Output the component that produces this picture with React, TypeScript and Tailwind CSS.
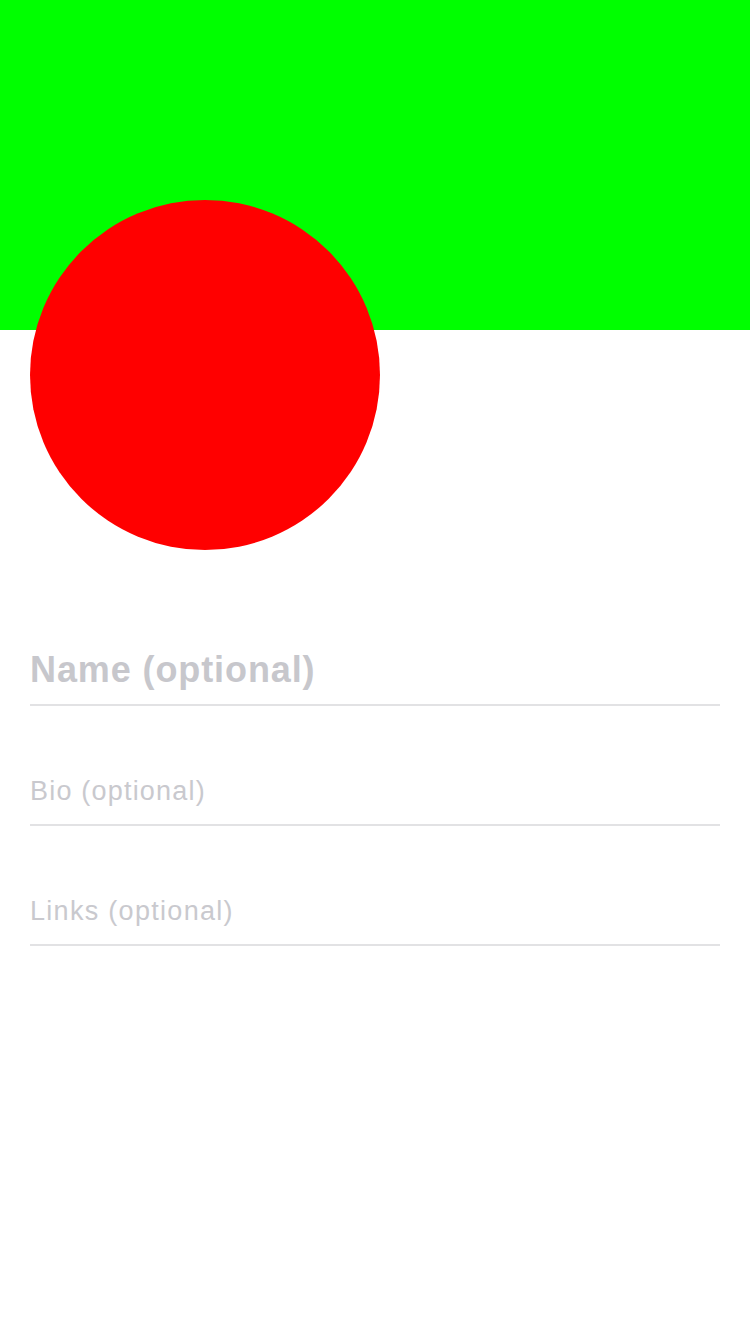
export default function App() {
  return (
    <div className="min-h-[1334px] w-[750px] bg-white font-['Liberation_Sans',Arial,sans-serif]">
      {/* Cover */}
      <div className="h-[330px] w-full bg-[#00ff00]" />

      {/* Avatar overlapping the cover */}
      <div className="relative -mt-[130px] ml-[30px] h-[350px] w-[350px] rounded-full bg-[#ff0000]" />

      {/* Profile fields */}
      <div className="flex flex-col px-[30px]">
        <div className="mt-[102px] border-b-2 border-[#e2e2e4] pb-[16px]">
          <div className="text-[36px] font-bold leading-[36px] tracking-[0.9px] text-[#c7c7cc]">
            Name (optional)
          </div>
        </div>
        <div className="mt-[72px] border-b-2 border-[#e2e2e4] pb-[19px]">
          <div className="text-[27px] leading-[27px] tracking-[1.2px] text-[#c9c9ce]">
            Bio (optional)
          </div>
        </div>
        <div className="mt-[72px] border-b-2 border-[#e2e2e4] pb-[19px]">
          <div className="text-[27px] leading-[27px] tracking-[1.3px] text-[#c9c9ce]">
            Links (optional)
          </div>
        </div>
      </div>
    </div>
  );
}
